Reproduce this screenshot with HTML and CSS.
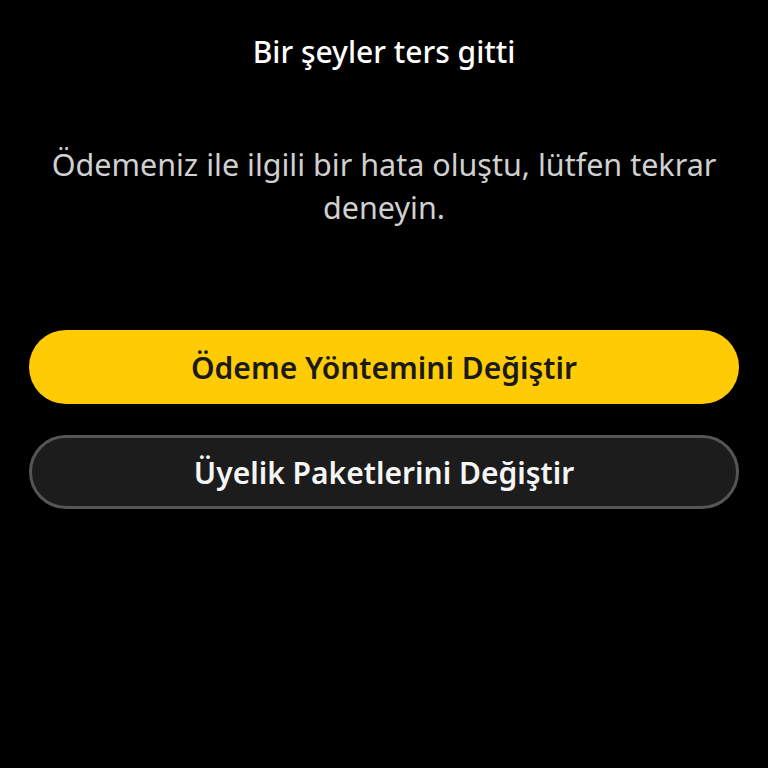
FILE: index.html
```html
<!doctype html>
<html lang="tr">
  <head>
    <meta charset="UTF-8">
    <meta name="viewport" content="width=device-width, initial-scale=1.0">
    <title>Bir şeyler ters gitti</title>
    <link rel="stylesheet" href="styles.css">
  </head>
  <body>
    <div class="page">
      <h1 class="title">Bir şeyler ters gitti</h1>

      <p class="message">
        Ödemeniz ile ilgili bir hata oluştu, lütfen tekrar deneyin.
      </p>

      <div class="actions">
        <button class="btn btn-primary">Ödeme Yöntemini Değiştir</button>
        <button class="btn btn-secondary">Üyelik Paketlerini Değiştir</button>
      </div>
    </div>
  </body>
</html>
```

FILE: styles.css
```css
html,
body {
  margin: 0;
  height: 100%;
  background: #000;
}

body {
  font-family: "Noto Sans", "Open Sans", sans-serif;
  color: #fff;
}

.page {
  padding: 0 29px;
  display: flex;
  flex-direction: column;
  align-items: center;
}

.title {
  margin: 32px 0 0;
  font-size: 30px;
  font-weight: 500;
  line-height: 40px;
  text-align: center;
}

.message {
  margin: 71px 0 0;
  font-size: 30.5px;
  font-weight: 400;
  line-height: 43px;
  color: #d0d0d0;
  text-align: center;
  max-width: 700px;
}

.actions {
  margin-top: 101px;
  width: 100%;
  display: flex;
  flex-direction: column;
  gap: 31px;
}

.btn {
  width: 100%;
  height: 74px;
  border-radius: 37px;
  font-family: inherit;
  font-size: 30px;
  font-weight: 600;
  cursor: pointer;
}

.btn-primary {
  background: #ffcb05;
  color: #1a1a1a;
  border: 0;
}

.btn-secondary {
  background: #1c1c1c;
  color: #f5f5f5;
  border: 3px solid #555;
}
```
